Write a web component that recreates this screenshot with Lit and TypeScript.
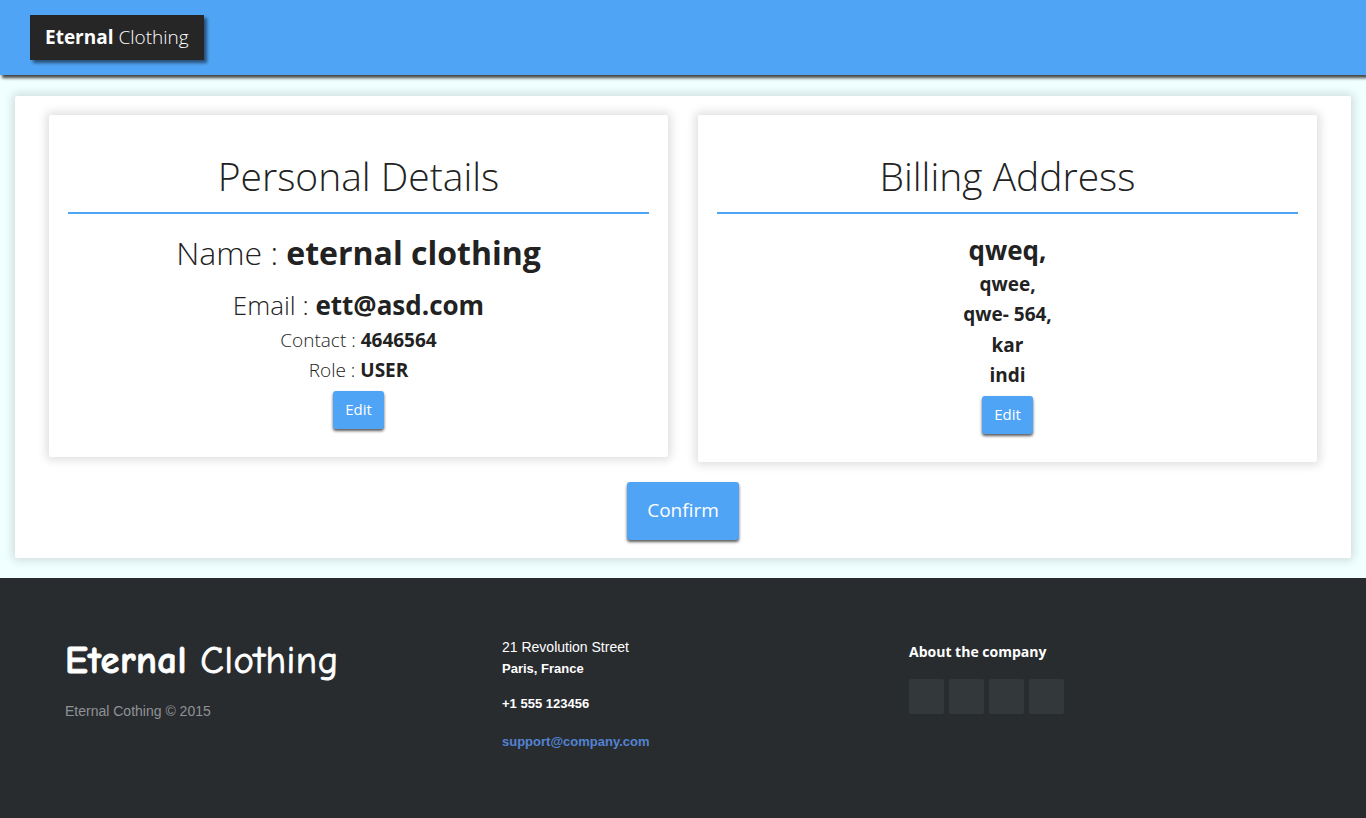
import { LitElement, html, css } from "lit";
import { customElement } from "lit/decorators.js";

@customElement("app-root")
export class AppRoot extends LitElement {
  static styles = css`
    :host { display: flex; flex-direction: column; height: 818px; overflow: hidden; background: #f0ffff; color: #222; font-family: "Open Sans", sans-serif; }
    * { box-sizing: border-box; }
    header { flex: none; height: 75px; padding: 15px 30px; background: #50a4f5; box-shadow: 2px 3px 3px #444; }
    .brand { display: inline-block; height: 45px; padding: 0 15px; background: #262626; color: #fff; font-size: 19px; font-weight: 300; line-height: 45px; white-space: nowrap; box-shadow: 3px 3px 3px rgba(0, 0, 0, .5); }
    .panel { flex: none; margin: 21px 15px 20px; height: 462px; padding: 19px 34px 0; background: #fff; border-radius: 2px; box-shadow: 0 0 10px 3px rgba(0, 0, 0, .13); text-align: center; }
    .cards { display: grid; grid-template-columns: 619px 619px; gap: 30px; align-items: start; height: 367px; }
    .card { padding: 32px 19px 28px; background: #fff; border-radius: 2px; box-shadow: 0 0 10px 3px rgba(0, 0, 0, .13); font-weight: 300; }
    h1 { margin: 0 0 16px; height: 67px; padding-top: 1px; border-bottom: 2px solid #50a4f5; font-size: 39px; line-height: 56px; font-weight: 300; }
    .name { font-size: 32px; line-height: 45px; margin-bottom: 12px; }
    .email { font-size: 26px; line-height: 36px; margin-bottom: 2px; }
    .line { font-size: 19px; line-height: 30px; }
    .town { padding-top: 2px; font-size: 26px; line-height: 37px; }
    .address .line { line-height: 30.3px; }
    b { font-weight: 700; }
    button { display: block; margin: 6px auto 0; padding: 0; border: 0; width: 51px; height: 38px; border-radius: 3px; background: #50a4f5; color: #fff; font: 400 15px/36px "Open Sans", sans-serif; padding-bottom: 2px; box-shadow: 0 2px 3px rgba(0, 0, 0, .65); }
    .address button { margin-top: 5.8px; }
    .confirm { margin-top: 0; width: 112px; height: 58px; font-size: 19px; line-height: 56px; }
    footer { flex: 1; display: grid; grid-template-columns: 437px 407px 1fr; padding: 60px 65px 0; background: #292c2f; color: #fff; font-family: "Liberation Sans", sans-serif; }
    .logo { margin-top: -2px; height: 50px; font-family: "Comic Sans MS", "Comic Neue", Lato, sans-serif; font-size: 38.5px; line-height: 49px; letter-spacing: .5px; -webkit-text-stroke: .8px #fff; white-space: nowrap; }
    .copy { margin-top: 15px; color: #8f9296; font-size: 14px; line-height: 20px; }
    .contact { font-size: 14px; line-height: 20px; margin-top: -1px; }
    .contact b { display: block; font-size: 13px; line-height: 20px; }
    .contact .city { margin-top: 2px; }
    .contact .phone { margin-top: 15px; }
    .contact .mail { margin-top: 18px; color: #5383d3; }
    .about { padding-top: 4px; font: 700 14px/20px "Open Sans", sans-serif; }
    .social { display: flex; gap: 5px; margin-top: 17px; }
    .social span { width: 35px; height: 35px; border-radius: 2px; background: #33383b; }
  `;

  render() {
    return html`
      <header><div class="brand"><b>Eternal</b> Clothing</div></header>
      <main class="panel">
        <div class="cards">
          <section class="card">
            <h1>Personal Details</h1>
            <div class="name">Name : <b>eternal clothing</b></div>
            <div class="email">Email : <b>ett@asd.com</b></div>
            <div class="line">Contact : <b>4646564</b></div>
            <div class="line">Role : <b>USER</b></div>
            <button>Edit</button>
          </section>
          <section class="card address">
            <h1>Billing Address</h1>
            <div class="town"><b>qweq,</b></div>
            ${["qwee,", "qwe- 564,", "kar", "indi"].map((t) => html`<div class="line"><b>${t}</b></div>`)}
            <button>Edit</button>
          </section>
        </div>
        <button class="confirm">Confirm</button>
      </main>
      <footer>
        <div>
          <div class="logo"><b>Eternal</b> Clothing</div>
          <div class="copy">Eternal Cothing © 2015</div>
        </div>
        <div class="contact">
          <div>21 Revolution Street</div>
          <b class="city">Paris, France</b>
          <b class="phone">+1 555 123456</b>
          <b class="mail">support@company.com</b>
        </div>
        <div class="about">
          <div>About the company</div>
          <div class="social"><span></span><span></span><span></span><span></span></div>
        </div>
      </footer>
    `;
  }
}
